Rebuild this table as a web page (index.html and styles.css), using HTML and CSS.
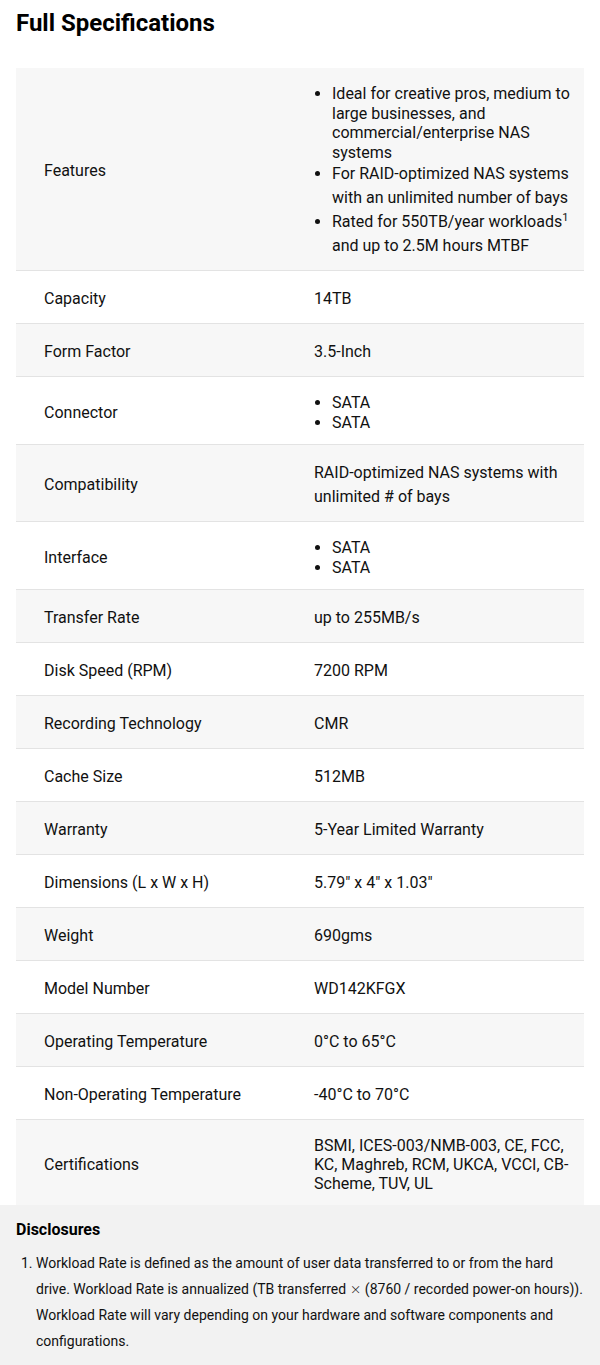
FILE: index.html
```html
<!DOCTYPE html>
<html lang="en">
<head>
<meta charset="utf-8">
<title>Full Specifications</title>
<link rel="stylesheet" href="styles.css">
</head>
<body>
<section class="specs">
  <h2 class="specs-title">Full Specifications</h2>
  <table class="spec-table">
    <colgroup><col class="col-label"><col class="col-value"></colgroup>
    <tbody>
      <tr><td class="label">Features</td><td class="value">
        <ul class="bullets">
          <li class="tight">Ideal for creative pros, medium to large businesses, and commercial/enterprise NAS systems</li>
          <li class="loose">For RAID-optimized NAS systems with an unlimited number of bays</li>
          <li class="loose">Rated for 550TB/year workloads<sup>1</sup> and up to 2.5M hours MTBF</li>
        </ul>
      </td></tr>
      <tr><td class="label">Capacity</td><td class="value">14TB</td></tr>
      <tr><td class="label">Form Factor</td><td class="value">3.5-Inch</td></tr>
      <tr><td class="label">Connector</td><td class="value">
        <ul class="bullets"><li class="tight">SATA</li><li class="tight">SATA</li></ul>
      </td></tr>
      <tr><td class="label">Compatibility</td><td class="value">RAID-optimized NAS systems with unlimited # of bays</td></tr>
      <tr><td class="label">Interface</td><td class="value">
        <ul class="bullets"><li class="tight">SATA</li><li class="tight">SATA</li></ul>
      </td></tr>
      <tr><td class="label">Transfer Rate</td><td class="value">up to 255MB/s</td></tr>
      <tr><td class="label">Disk Speed (RPM)</td><td class="value">7200 RPM</td></tr>
      <tr><td class="label">Recording Technology</td><td class="value">CMR</td></tr>
      <tr><td class="label">Cache Size</td><td class="value">512MB</td></tr>
      <tr><td class="label">Warranty</td><td class="value">5-Year Limited Warranty</td></tr>
      <tr><td class="label">Dimensions (L x W x H)</td><td class="value">5.79" x 4" x 1.03"</td></tr>
      <tr><td class="label">Weight</td><td class="value">690gms</td></tr>
      <tr><td class="label">Model Number</td><td class="value">WD142KFGX</td></tr>
      <tr><td class="label">Operating Temperature</td><td class="value">0°C to 65°C</td></tr>
      <tr><td class="label">Non-Operating Temperature</td><td class="value">-40°C to 70°C</td></tr>
      <tr><td class="label">Certifications</td><td class="value tight-text">BSMI, ICES-003/NMB-003, CE, FCC, KC, Maghreb, RCM, UKCA, VCCI, CB-Scheme, TUV, UL</td></tr>
    </tbody>
  </table>
</section>
<section class="disclosures">
  <h3 class="disc-title">Disclosures</h3>
  <ol class="disc-list">
    <li>Workload Rate is defined as the amount of user data transferred to or from the hard drive. Workload Rate is annualized (TB transferred <span class="times">&#x2A2F;</span> (8760 / recorded power-on hours)). Workload Rate will vary depending on your hardware and software components and configurations.</li>
  </ol>
</section>
</body>
</html>
```

FILE: styles.css
```css
* { box-sizing: border-box; }
body {
  margin: 0;
  font-family: Roboto, "Liberation Sans", Arial, sans-serif;
  color: #111;
  background: #fff;
}
.specs { padding: 0 16px; }
.specs-title {
  margin: 9px 0 31px;
  font-size: 24px;
  line-height: 28px;
  font-weight: 700;
  color: #000;
}
.spec-table {
  width: 100%;
  border-collapse: collapse;
  table-layout: fixed;
  font-size: 16px;
}
.col-label { width: 270px; }
.spec-table tr { border-bottom: 1px solid #e3e3e3; }
.spec-table tr:last-child { border-bottom: none; }
.spec-table tr:nth-child(odd) { background: #f7f7f7; }
.spec-table td {
  padding: 16px 12px 12px 28px;
  line-height: 24px;
  vertical-align: middle;
}
.value.tight-text { line-height: 19px; }
.bullets {
  margin: 0;
  padding-left: 18px;
  list-style: disc;
}
.bullets .tight { line-height: 19.5px; }
.bullets .loose { line-height: 24px; }
.bullets sup { font-size: 11px; line-height: 0; }
.disclosures {
  background: #f2f2f2;
  padding: 15px 16px 11px;
}
.disc-title {
  margin: 0;
  font-size: 16px;
  line-height: 20px;
  font-weight: 700;
  color: #000;
}
.disc-list {
  margin: 10px 0 0;
  padding-left: 20px;
  font-size: 14px;
  line-height: 26px;
}
.times { font-family: "DejaVu Sans", sans-serif; font-weight: 300; }
```
